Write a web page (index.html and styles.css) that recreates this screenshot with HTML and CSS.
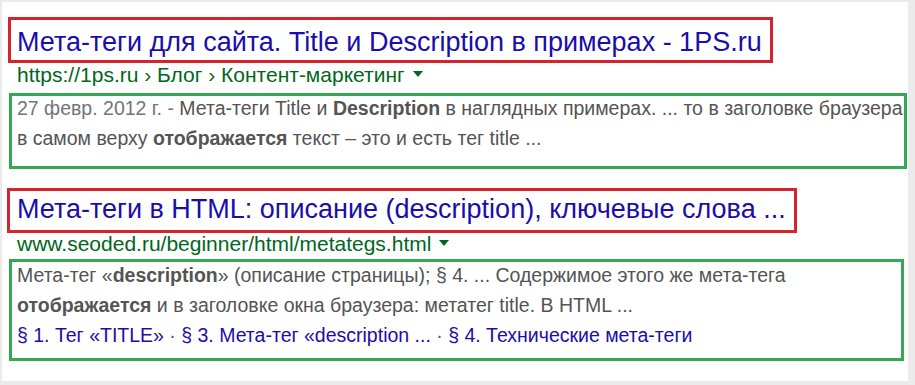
FILE: index.html
```html
<!DOCTYPE html>
<html lang="ru">
<head>
<meta charset="utf-8">
<link rel="stylesheet" href="styles.css">
</head>
<body>
<div class="card">
  <div class="result">
    <div class="title-box box-1">
      <a class="title">Мета-теги для сайта. Title и Description в примерах - 1PS.ru</a>
    </div>
    <div class="url url-1">https://1ps.ru › Блог › Контент-маркетинг<span class="caret"></span></div>
    <div class="snippet-box snip-1">
      <div class="snippet-text"><span class="date">27 февр. 2012 г. - </span>Мета-теги Title и <b>Description</b> в наглядных примерах. ... то в заголовке браузера<br>в самом верху <b>отображается</b> текст – это и есть тег title ...</div>
    </div>
  </div>
  <div class="result">
    <div class="title-box box-2">
      <a class="title">Мета-теги в HTML: описание (description), ключевые слова ...</a>
    </div>
    <div class="url url-2">www.seoded.ru/beginner/html/metategs.html<span class="caret"></span></div>
    <div class="snippet-box snip-2">
      <div class="snippet-text">Мета-тег «<b>description</b>» (описание страницы); § 4. ... Содержимое этого же мета-тега<br><b>отображается</b> и в заголовке окна браузера: метатег title. В HTML ...
        <div class="sitelinks"><a>§ 1. Тег «TITLE»</a> · <a>§ 3. Мета-тег «description ...</a> · <a>§ 4. Технические мета-теги</a></div>
      </div>
    </div>
  </div>
</div>
</body>
</html>
```

FILE: styles.css
```css
html, body {
  margin: 0;
  padding: 0;
  background: #ebebeb;
}
body {
  font-family: "Liberation Sans", Arial, sans-serif;
  width: 915px;
  height: 385px;
  overflow: hidden;
}
.card {
  background: #fff;
  margin: 2px 7px 0 2px;
  height: 379px;
  padding-top: 15px;
  box-sizing: border-box;
}
.title-box {
  border: 3px solid #d6242e;
  box-sizing: border-box;
  overflow: hidden;
}
.box-1 {
  margin-left: 6px;
  width: 765px;
  height: 46px;
  padding: 2px 0 0 6px;
}
.box-1 .title {
  line-height: 40px;
}
.box-2 {
  margin-left: 5px;
  width: 790px;
  height: 45px;
  margin-top: 19px;
  padding: 0 0 0 7px;
}
.box-2 .title {
  line-height: 36px;
}
.title {
  display: block;
  font-size: 27px;
  color: #1a0dab;
  white-space: nowrap;
}
.url {
  font-size: 21px;
  color: #006621;
  padding-left: 15px;
  line-height: 24px;
  white-space: nowrap;
}
.url-1 {
  height: 30px;
}
.url-2 {
  height: 26px;
}
.url-2 {
  line-height: 22px;
}
.caret {
  display: inline-block;
  width: 0;
  height: 0;
  border-left: 5.5px solid transparent;
  border-right: 5.5px solid transparent;
  border-top: 6px solid #006621;
  margin-left: 8px;
  vertical-align: 5px;
}
.snippet-box {
  border: 3px solid #34a853;
  box-sizing: border-box;
  margin-left: 7px;
  font-size: 19.5px;
  color: #545454;
  padding-left: 5px;
  white-space: nowrap;
  overflow: hidden;
}
.snippet-text {
  margin-top: -2px;
}
.snip-1 {
  width: 898px;
  height: 76px;
  line-height: 29.5px;
}
.snip-2 {
  width: 895px;
  height: 102px;
  line-height: 30px;
}
.date {
  color: #70757a;
}
.sitelinks {
  color: #545454;
}
.sitelinks a {
  color: #1a0dab;
}
```
